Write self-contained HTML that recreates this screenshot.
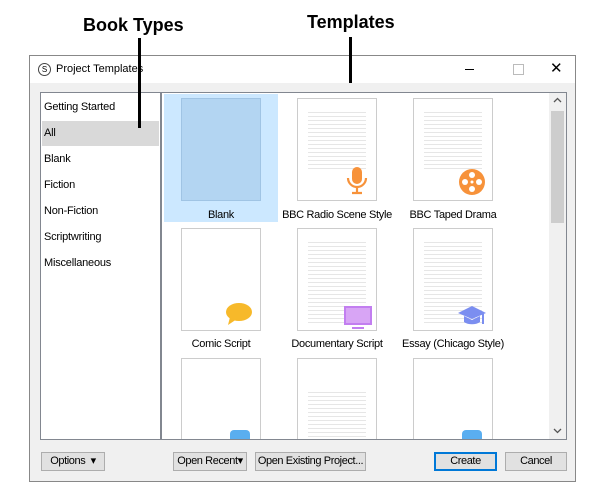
<!DOCTYPE html>
<html><head><style>
body{margin:0;width:600px;height:492px;background:#fff;position:relative;font-family:"Liberation Sans",sans-serif;overflow:hidden}
.a{position:absolute}
.ann{font-weight:bold;font-size:18px;color:#000}
.win{left:29px;top:55px;width:547px;height:427px;border:1px solid #888;background:#f0f0f0;box-sizing:border-box}
.tb{left:0;top:0;width:545px;height:27px;background:#fff}
.list{left:10px;top:36px;width:121px;height:348px;background:#fff;border:1px solid #828790;box-sizing:border-box}
.li{position:absolute;left:3px;font-size:11px;color:#000;letter-spacing:-0.2px}
.grid{left:131px;top:36px;width:406px;height:348px;background:#fff;border:1px solid #828790;box-sizing:border-box;overflow:hidden}
.pg{position:absolute;width:80px;height:103px;border:1px solid #ccc;background:#fff;box-sizing:border-box}
.tx{position:absolute;left:10px;right:10px;top:10px;height:60px;background:repeating-linear-gradient(#fff 0 3px,#e6e6e6 3px 4px)}
.lb{position:absolute;width:130px;text-align:center;font-size:11px;letter-spacing:-0.3px;white-space:nowrap}
.btn{position:absolute;top:396px;height:19px;background:#e1e1e1;border:1px solid #adadad;box-sizing:border-box;font-size:11px;text-align:center;line-height:17px;white-space:nowrap;letter-spacing:-0.4px;overflow:hidden}
</style></head><body>
<div class="a ann" style="left:83px;top:15px">Book Types</div>
<div class="a ann" style="left:307px;top:12px">Templates</div>
<div class="a win">
 <div class="a tb">
  <div class="a" style="left:8px;top:7px;width:11px;height:11px;border:1px solid #444;border-radius:50%;font-size:8px;text-align:center;line-height:11px">S</div>
  <div class="a" style="left:26px;top:7px;font-size:11px">Project Templates</div>
  <div class="a" style="left:435px;top:13px;width:9px;height:1px;background:#000"></div>
  <div class="a" style="left:483px;top:8px;width:9px;height:9px;border:1px solid #bbb"></div>
  <div class="a" style="left:520px;top:3px;font-size:15px">✕</div>
 </div>
 <div class="a list">
  <div class="li" style="top:8px">Getting Started</div>
  <div style="position:absolute;left:1px;top:28px;width:117px;height:25px;background:#d9d9d9"></div>
  <div class="li" style="top:34px">All</div>
  <div class="li" style="top:60px">Blank</div>
  <div class="li" style="top:86px">Fiction</div>
  <div class="li" style="top:112px">Non-Fiction</div>
  <div class="li" style="top:138px">Scriptwriting</div>
  <div class="li" style="top:164px">Miscellaneous</div>
 </div>
 <div class="a grid">
  <div style="position:absolute;left:2px;top:1px;width:114px;height:128px;background:#cce8ff"></div>
  <div class="pg" style="left:19px;top:5px;background:#b3d5f2;border-color:#a0c4e4"></div>
  <div class="lb" style="left:-6px;top:116px">Blank</div>
  <div class="pg" style="left:135px;top:5px"><div class="tx"></div></div>
  <svg style="position:absolute;left:184px;top:74px" width="22" height="28"><rect x="6" y="0" width="10" height="17" rx="5" fill="#f7923a"/><path d="M2 11a9 9 0 0 0 18 0M11 20v5M6 26h10" stroke="#f7923a" stroke-width="2.2" fill="none"/></svg>
  <div class="lb" style="left:110px;top:116px">BBC Radio Scene Style</div>
  <div class="pg" style="left:251px;top:5px"><div class="tx"></div></div>
  <svg style="position:absolute;left:297px;top:76px" width="26" height="26"><circle cx="13" cy="13" r="13" fill="#f7923a"/><g fill="#fff"><circle cx="13" cy="6" r="3"/><circle cx="13" cy="20" r="3"/><circle cx="6" cy="13" r="3"/><circle cx="20" cy="13" r="3"/><circle cx="13" cy="13" r="1.5"/></g></svg>
  <div class="lb" style="left:226px;top:116px">BBC Taped Drama</div>
  <div class="pg" style="left:19px;top:135px"></div>
  <svg style="position:absolute;left:64px;top:210px" width="26" height="22"><ellipse cx="13" cy="9" rx="13" ry="9" fill="#f7b92a"/><path d="M4 14l-2 8 9-6z" fill="#f7b92a"/></svg>
  <div class="lb" style="left:-6px;top:245px">Comic Script</div>
  <div class="pg" style="left:135px;top:135px"><div class="tx" style="height:85px"></div></div>
  <svg style="position:absolute;left:182px;top:213px" width="28" height="24"><rect x="1" y="1" width="26" height="17" fill="#d8a5f5" stroke="#c27ef0" stroke-width="2"/><rect x="8" y="21" width="12" height="2" fill="#c27ef0"/></svg>
  <div class="lb" style="left:110px;top:245px">Documentary Script</div>
  <div class="pg" style="left:251px;top:135px"><div class="tx" style="height:85px"></div></div>
  <svg style="position:absolute;left:295px;top:212px" width="30" height="22"><path d="M15 1L29 8 15 14 1 8z" fill="#7b8ef0"/><path d="M7 11v6c4 3 12 3 16 0v-6l-8 4z" fill="#7b8ef0"/><path d="M26 9v10" stroke="#7b8ef0" stroke-width="2"/></svg>
  <div class="lb" style="left:226px;top:245px">Essay (Chicago Style)</div>
  <div class="pg" style="left:19px;top:265px;height:90px"></div>
  <div class="pg" style="left:135px;top:265px;height:90px"><div class="tx" style="top:30px"></div></div>
  <div class="pg" style="left:251px;top:265px;height:90px"></div>
  <div style="position:absolute;left:68px;top:337px;width:20px;height:9px;background:#5aaef0;border-radius:4px 4px 0 0"></div>
  <div style="position:absolute;left:300px;top:337px;width:20px;height:9px;background:#5aaef0;border-radius:4px 4px 0 0"></div>
  <div style="position:absolute;left:387px;top:0;width:17px;height:346px;background:#f0f0f0"></div>
  <div style="position:absolute;left:389px;top:18px;width:13px;height:112px;background:#cdcdcd"></div>
  <svg style="position:absolute;left:391px;top:4px" width="9" height="6"><path d="M1 5l3.5-3.5L8 5" stroke="#555" fill="none" stroke-width="1.3"/></svg>
  <svg style="position:absolute;left:391px;top:335px" width="9" height="6"><path d="M1 1l3.5 3.5L8 1" stroke="#555" fill="none" stroke-width="1.3"/></svg>
 </div>
 <div class="btn" style="left:11px;width:64px">Options &nbsp;▾</div>
 <div class="btn" style="left:143px;width:74px">Open Recent▾</div>
 <div class="btn" style="left:225px;width:111px">Open Existing Project...</div>
 <div class="btn" style="left:404px;width:63px;border:2px solid #0078d7;line-height:15px">Create</div>
 <div class="btn" style="left:475px;width:62px">Cancel</div>
</div>
<div class="a" style="left:138px;top:38px;width:3px;height:90px;background:#000"></div>
<div class="a" style="left:349px;top:37px;width:3px;height:46px;background:#000"></div>
</body></html>
